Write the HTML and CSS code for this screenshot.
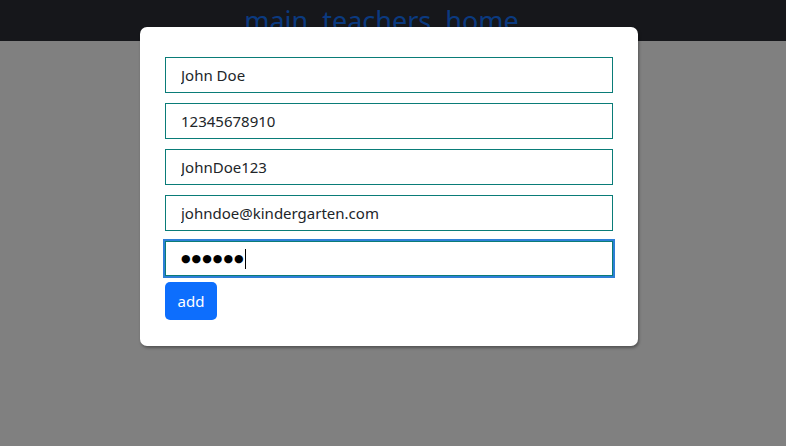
FILE: index.html
```html
<!DOCTYPE html>
<html>
<head>
<meta charset="utf-8">
<link rel="stylesheet" href="styles.css">
</head>
<body>
<header class="topbar"><span class="title">main&nbsp; teachers&nbsp; home</span></header>
<div class="overlay">
  <form class="modal">
    <input class="field" type="text" value="John Doe">
    <input class="field" type="text" value="12345678910">
    <input class="field" type="text" value="JohnDoe123">
    <input class="field" type="text" value="johndoe@kindergarten.com">
    <div class="field focused" role="textbox"><span class="dots">●●●●●●</span><span class="caret"></span></div>
    <div class="actions"><button type="button" class="btn">add</button></div>
  </form>
</div>
</body>
</html>
```
FILE: styles.css
```css
html, body { margin: 0; padding: 0; height: 100%; }
body {
  font-family: "Noto Sans", "Open Sans", sans-serif;
  background: #808080;
  overflow: hidden;
}
.topbar {
  height: 41px;
  background: #16171b;
  display: flex;
  justify-content: center;
  padding-right: 23px;
}
.title {
  color: #0b3a80;
  font-size: 27px;
  line-height: 1;
  padding-top: 7px;
}
.overlay {
  position: absolute;
  top: 0; left: 0; right: 0; bottom: 0;
  display: flex;
  justify-content: center;
  align-items: flex-start;
  padding-top: 27px;
  padding-right: 8px;
}
.modal {
  width: 498px;
  box-sizing: border-box;
  background: #fff;
  border-radius: 7px;
  box-shadow: 1px 2px 3px rgba(0,0,0,0.35);
  padding: 30px 25px 26px;
  display: flex;
  flex-direction: column;
  gap: 10px;
}
.field {
  box-sizing: border-box;
  height: 36px;
  width: 448px;
  margin: 0;
  border: 1px solid #0a7c78;
  border-radius: 0;
  padding: 0 15px;
  font-family: "Noto Sans", sans-serif;
  font-size: 15px;
  color: #212529;
  background: #fff;
  outline: none;
}
.field.focused {
  outline: 2px solid #2d7fd6;
  outline-offset: 0;
  height: 35px;
  display: flex;
  align-items: center;
  padding-left: 15px;
}
.dots {
  font-family: "DejaVu Sans", sans-serif;
  font-size: 11px;
  color: #000;
  letter-spacing: 1px;
  line-height: 1;
}
.caret {
  width: 1px;
  height: 20px;
  background: #000;
  margin-left: 0;
}
.actions { display: flex; margin-top: -4px; }
.btn {
  height: 38px;
  width: 52px;
  border: none;
  border-radius: 5px;
  background: #0d6efd;
  color: #fff;
  font-family: "Noto Sans", sans-serif;
  font-size: 15px;
  padding: 0;
}
```
